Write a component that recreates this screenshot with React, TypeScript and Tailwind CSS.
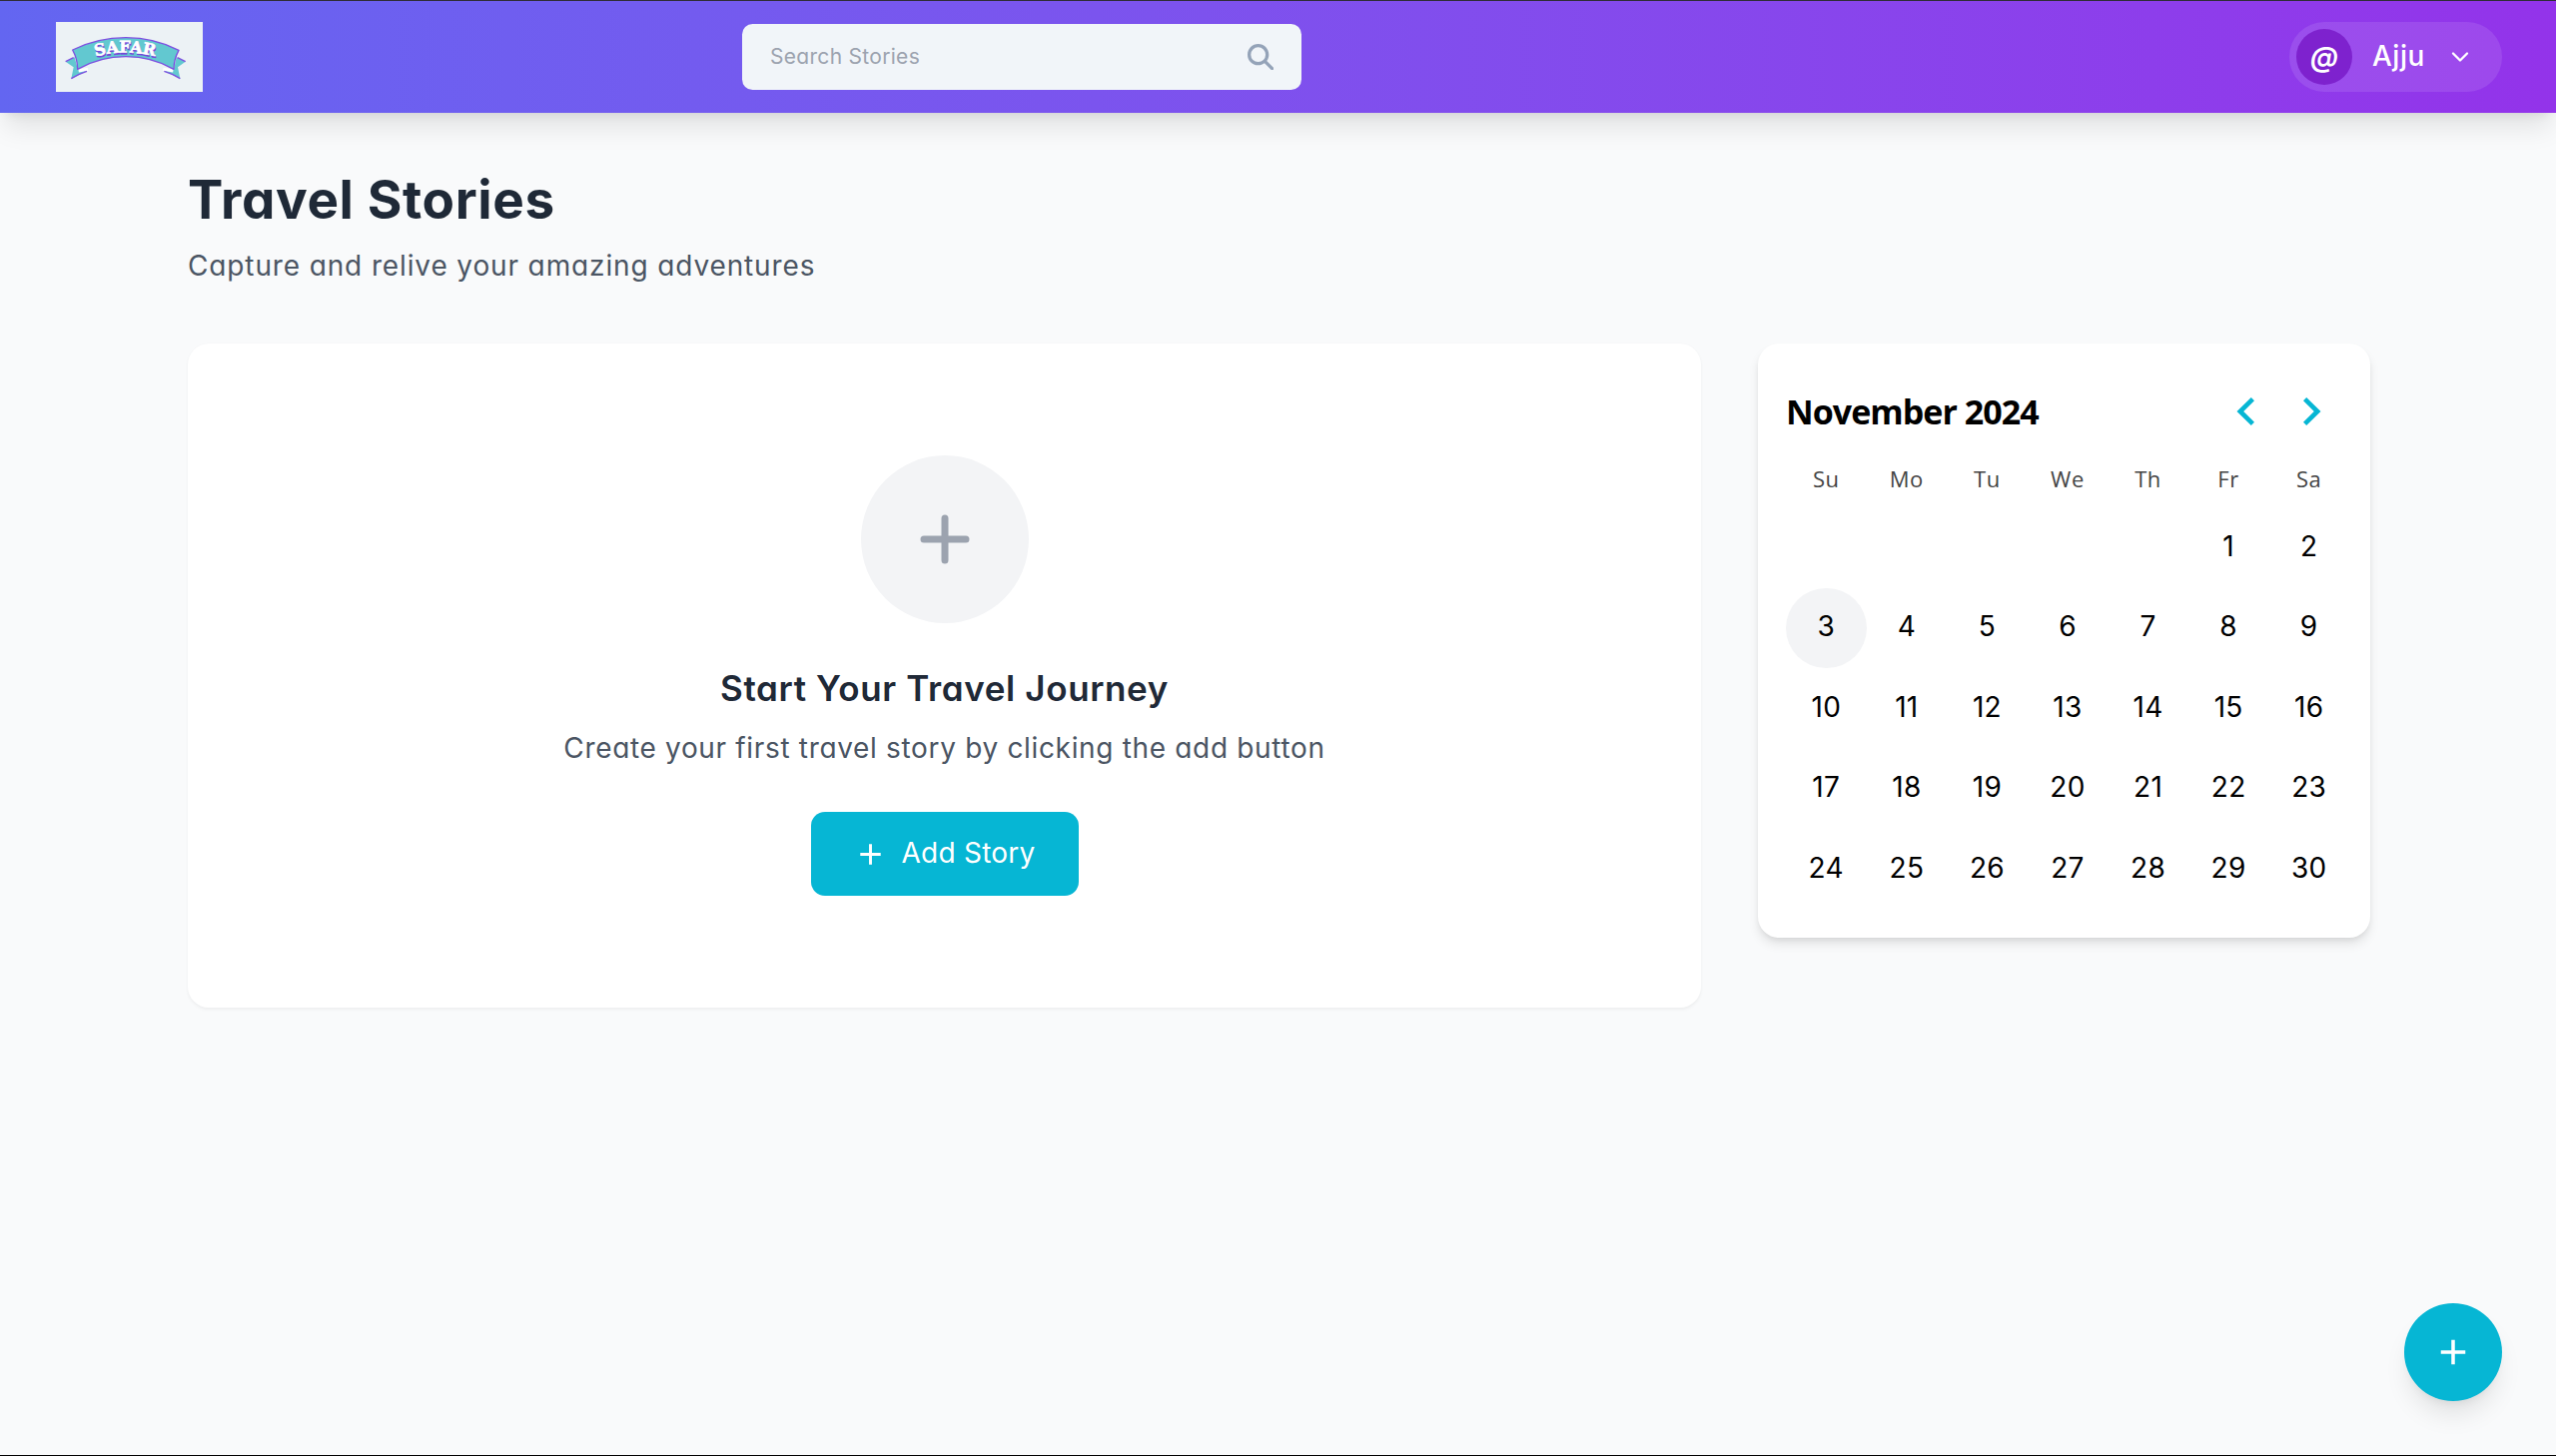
import { FaMagnifyingGlass } from "react-icons/fa6";
import { FiChevronDown } from "react-icons/fi";
import { MdAdd } from "react-icons/md";

const WEEKDAYS = ["Su", "Mo", "Tu", "We", "Th", "Fr", "Sa"];
const LEADING_BLANKS = 5;
const DAYS = Array.from({ length: 30 }, (_, i) => i + 1);
const TODAY = 3;

function Logo() {
  return (
    <svg viewBox="0 0 441 210" className="h-[70px] w-[147px] bg-[#ecf2f5]" role="img" aria-label="Safar">
      <g stroke="#7d4fe0" strokeWidth="4" strokeLinejoin="round" fill="#62c8d0">
        <path d="M29 119 L56 106 L66 143 L92 148 L46 170 L53 136 Z" stroke="none" />
        <path d="M389 119 L362 106 L354 143 L326 148 L373 170 L366 136 Z" stroke="none" />
        <path d="M68 147 L96 142" stroke="#ffffff" strokeWidth="9" />
        <path d="M352 147 L322 142" stroke="#ffffff" strokeWidth="9" />
        <path d="M46 170 Q68 156 93 148" fill="none" />
        <path d="M373 170 Q352 156 325 148" fill="none" />
        <path d="M29 119 L53 107" fill="none" />
        <path d="M389 119 L365 107" fill="none" />
        <path d="M50 84 Q125 47 210 47 Q295 47 369 85 Q354 112 354 142 Q288 104 210 104 Q132 104 65 142 Q65 112 50 84 Z" />
      </g>
      <path id="safar-arc" d="M104 107 Q206 76 312 107" fill="none" />
      <g fontFamily="'DejaVu Serif', serif" fontWeight="700" fontSize="48" textAnchor="middle">
        <text fill="#7446d8" stroke="#7446d8" strokeWidth="2" transform="translate(2 5)">
          <textPath href="#safar-arc" startOffset="50%" textLength="180" lengthAdjust="spacingAndGlyphs">SAFAR</textPath>
        </text>
        <text fill="#ffffff" stroke="#ffffff" strokeWidth="2">
          <textPath href="#safar-arc" startOffset="50%" textLength="180" lengthAdjust="spacingAndGlyphs">SAFAR</textPath>
        </text>
      </g>
    </svg>
  );
}

function Header() {
  return (
    <header className="relative flex h-[113px] items-center justify-between border-t border-[#2f2d38] bg-linear-to-r from-[#6366f1] to-[#9333ea] pr-[54px] pl-[56px] shadow-[0_17.5px_26px_-5px_rgba(0,0,0,0.1),0_7px_10.5px_-7px_rgba(0,0,0,0.1)]">
      <div className="flex w-[687px]">
        <Logo />
      </div>
      <div className="flex h-[66px] w-[560px] items-center justify-between rounded-[10.5px] bg-[#f1f5f9] pr-[28px] pl-[28px]">
        <span className="text-[21px] leading-[30px] tracking-[0.3px] text-[#9ca3af]">Search Stories</span>
        <FaMagnifyingGlass className="size-[26.25px] text-[#94a3b8]" />
      </div>
      <div className="flex flex-1 justify-end">
        <div className="flex h-[70px] w-[213px] items-center rounded-full bg-white/10 pl-[7px] text-white">
          <div className="flex size-[56px] items-center justify-center rounded-full bg-[#7e22ce] text-[28px] leading-none font-semibold italic">
            @
          </div>
          <span className="ml-[20px] w-[53px] pb-[2px] text-[28px] leading-[42px] font-medium tracking-[0.5px]">Ajju</span>
          <FiChevronDown className="ml-[21px] size-[28px]" />
        </div>
      </div>
    </header>
  );
}

function EmptyState() {
  return (
    <section className="flex h-[665px] w-[1515px] flex-col items-center rounded-[21px] bg-white pt-[112px] shadow-[0_1.75px_3.5px_0_rgba(0,0,0,0.05)]">
      <div className="flex size-[168px] items-center justify-center rounded-full bg-[#f3f4f6]">
        <svg viewBox="0 0 24 24" className="size-[84px] text-[#9ca3af]" fill="none" stroke="currentColor" strokeWidth="2" strokeLinecap="round">
          <path d="M12 6v12M6 12h12" />
        </svg>
      </div>
      <h2 className="mt-[41px] text-[35px] leading-[49px] font-semibold tracking-[0.63px] text-[#1f2937]">Start Your Travel Journey</h2>
      <p className="mt-[14px] text-[28px] leading-[42px] tracking-[0.67px] text-[#4b5563]">
        Create your first travel story by clicking the add button
      </p>
      <button className="mt-[43px] flex h-[84px] w-[268px] items-center rounded-[14px] bg-[#06b6d4] pl-[42px] text-white">
        <MdAdd className="size-[35px]" />
        <span className="ml-[14px] pb-[2px] text-[28px] leading-[42px] tracking-[0.25px]">Add Story</span>
      </button>
    </section>
  );
}

function Calendar() {
  return (
    <section className="h-[595px] w-[613px] rounded-[21px] bg-white pt-[28px] pr-[21px] pl-[28px] shadow-[0_7px_10.5px_-1.75px_rgba(0,0,0,0.1),0_3.5px_7px_-3.5px_rgba(0,0,0,0.1)]">
      <div className="flex h-[79px] items-center justify-between pr-[8px]">
        <h3 className="font-['Open_Sans',sans-serif] text-[34px] leading-[48px] font-bold tracking-[-0.95px] text-black">November 2024</h3>
        <div className="flex text-[#06b6d4]">
          <button className="flex w-[63px] justify-center" aria-label="Previous month">
            <svg viewBox="0 0 24 24" className="size-[42px]" fill="currentColor">
              <polygon points="16 18.112 9.818 12 16 5.89 14.172 4 6 12 14.172 20" />
            </svg>
          </button>
          <button className="flex w-[63px] justify-center" aria-label="Next month">
            <svg viewBox="0 0 24 24" className="size-[42px]" fill="currentColor">
              <polygon points="8 18.112 14.18 12 8 5.89 9.827 4 18 12 9.827 20" />
            </svg>
          </button>
        </div>
      </div>
      <div className="grid h-[57px] grid-cols-7 items-center pb-px text-center font-['Open_Sans',sans-serif] text-[22px] leading-[30px] font-medium tracking-[0.6px] text-[#444444]">
        {WEEKDAYS.map((day) => (
          <span key={day}>{day}</span>
        ))}
      </div>
      <div className="grid auto-rows-[80.5px] grid-cols-7 text-[28px] leading-none tracking-[0.3px] text-black">
        {Array.from({ length: LEADING_BLANKS }, (_, i) => (
          <span key={`blank-${i}`} />
        ))}
        {DAYS.map((day) => (
          <span
            key={day}
            className={
              day === TODAY
                ? "flex items-center justify-center rounded-full bg-[#f3f4f6] pb-[3px]"
                : "flex items-center justify-center pb-[3px]"
            }
          >
            {day}
          </span>
        ))}
      </div>
    </section>
  );
}

export default function App() {
  return (
    <div className="relative flex h-[1458px] w-[2559px] flex-col overflow-hidden border-b border-black bg-[#f9fafb] font-['Inter',sans-serif] [font-feature-settings:'cv11']">
      <Header />
      <main className="flex flex-col pt-[52px] pl-[188px]">
        <h1 className="text-[53px] leading-[70px] font-bold tracking-[0.62px] text-[#1f2937]">Travel Stories</h1>
        <p className="mt-[10px] text-[28px] leading-[42px] tracking-[0.87px] text-[#4b5563]">
          Capture and relive your amazing adventures
        </p>
        <div className="mt-[57px] flex items-start gap-[57px]">
          <EmptyState />
          <Calendar />
        </div>
      </main>
      <button
        className="absolute right-[54px] bottom-[54px] flex size-[98px] items-center justify-center rounded-full bg-[#06b6d4] text-white shadow-[0_17.5px_26px_-5px_rgba(0,0,0,0.1),0_7px_10.5px_-7px_rgba(0,0,0,0.1)]"
        aria-label="Add story"
      >
        <MdAdd className="size-[42px]" />
      </button>
    </div>
  );
}
